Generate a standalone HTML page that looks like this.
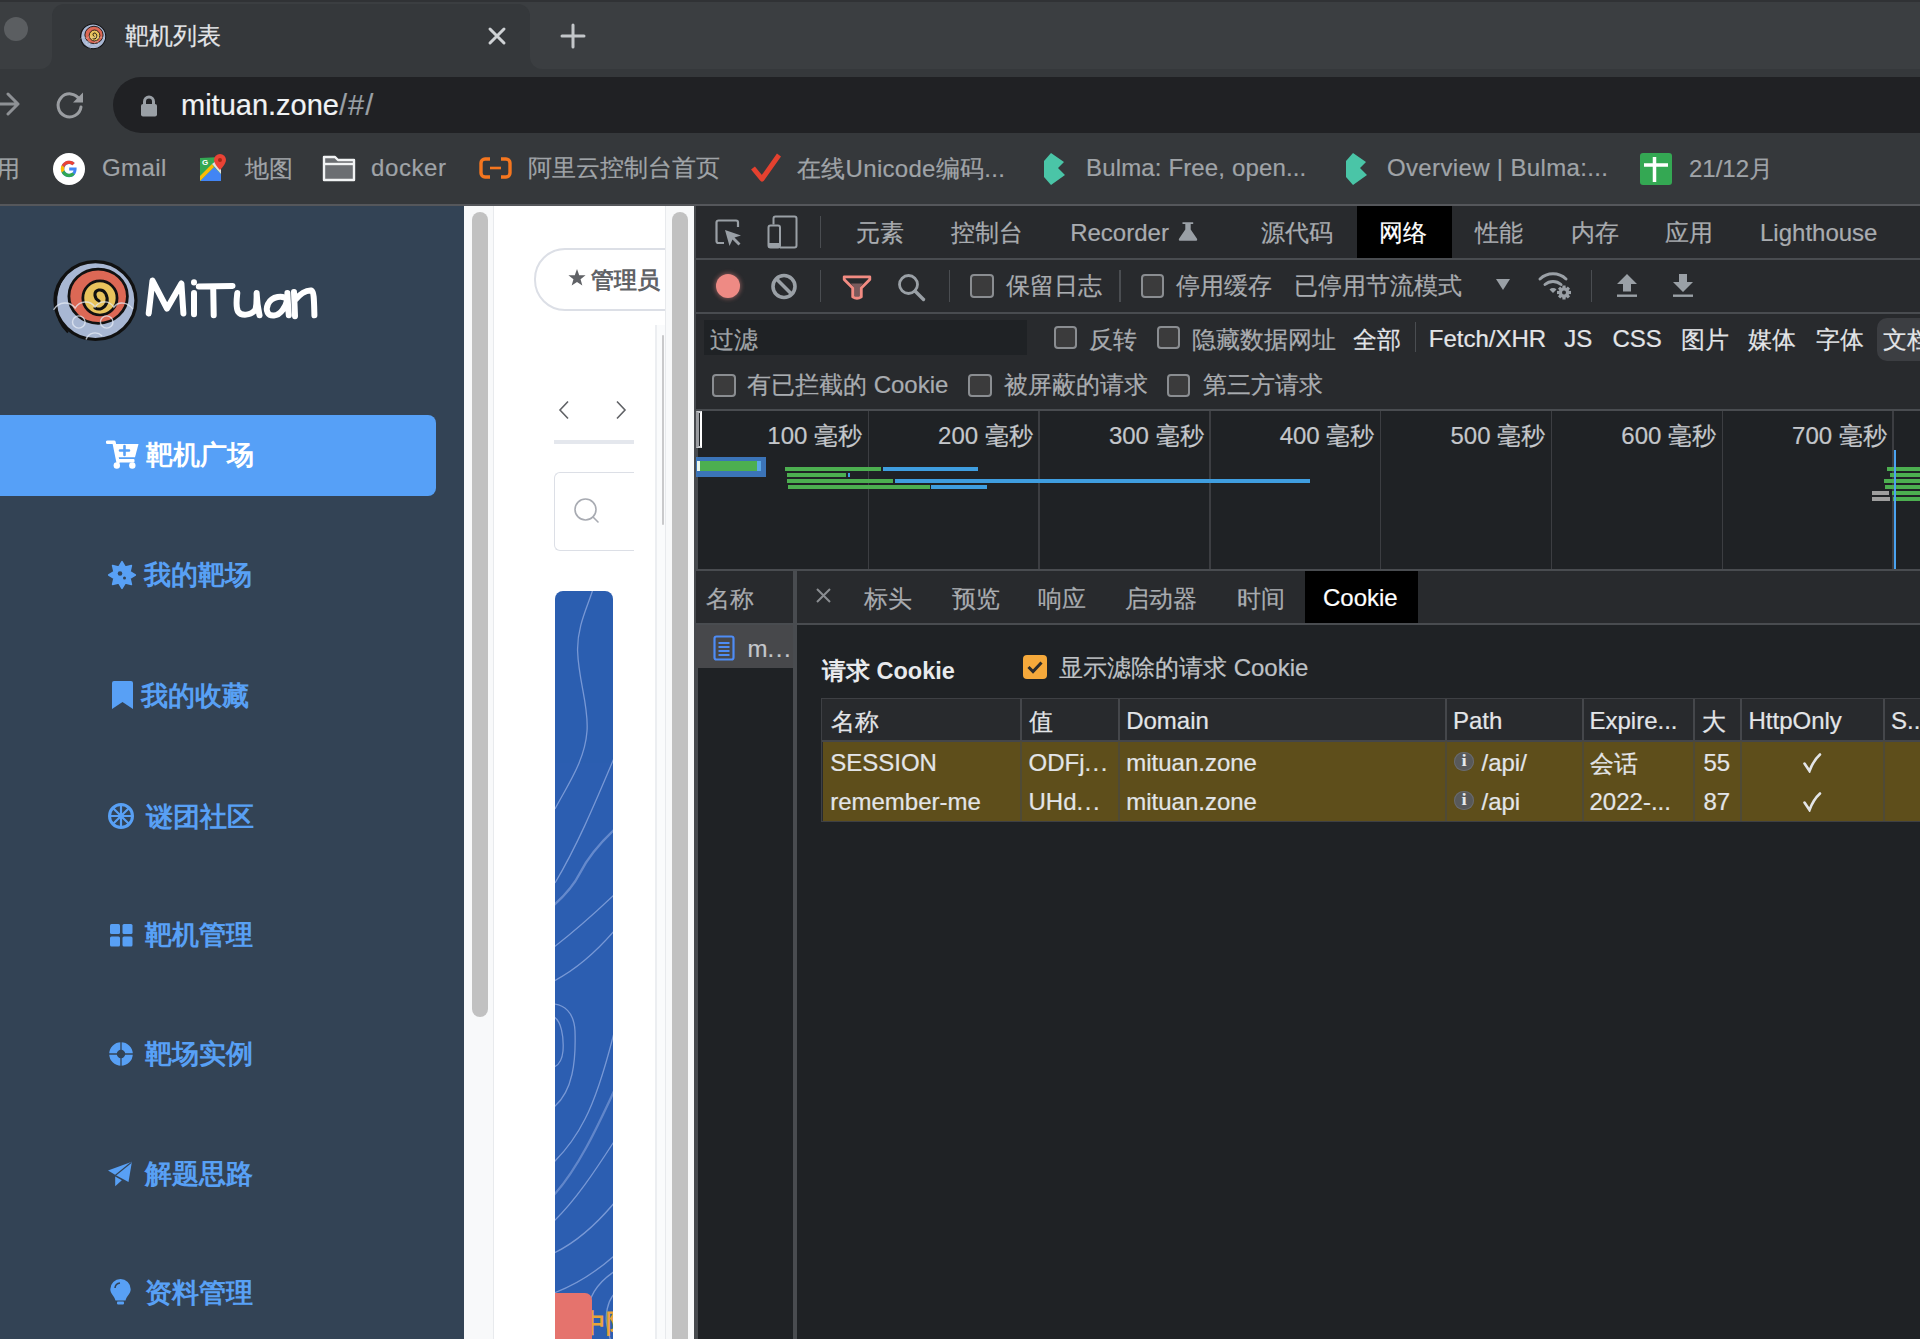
<!DOCTYPE html>
<html><head><meta charset="utf-8">
<style>
*{box-sizing:border-box;margin:0;padding:0}
html,body{width:1920px;height:1339px;overflow:hidden;background:#202124}
body{position:relative;font-family:"Liberation Sans",sans-serif;}
.a{position:absolute}
.t{position:absolute;white-space:nowrap;line-height:1;-webkit-text-stroke:0.2px currentColor}
</style></head><body>

<svg width="0" height="0" style="position:absolute"><defs>
<symbol id="logo" viewBox="0 0 100 96">
<ellipse cx="50.5" cy="47.5" rx="45" ry="44.5" fill="#a8b7d3" stroke="#111" stroke-width="3.6"/>
<path d="M16 20C3 36 3 68 20 84" stroke="#111" stroke-width="2.4" fill="none"/>
<ellipse cx="53.5" cy="42.5" rx="32.5" ry="31" fill="#dc6855" stroke="#111" stroke-width="3.1"/>
<ellipse cx="55.5" cy="44.5" rx="19" ry="19.5" fill="#e8c35c" stroke="#111" stroke-width="3.1"/>
<path d="M54.5 48C49 45 48 37 54 35.5C61 34 65 43 63 50C61 56 55 59 50 56" stroke="#111" stroke-width="3.4" fill="none" stroke-linecap="round"/>
<g stroke="#e6ecf6" stroke-width="1.6" fill="none" opacity="0.75">
<path d="M4 58C10 48 22 48 28 56C33 47 45 47 50 55C55 47 66 47 71 55C76 48 86 49 92 57"/>
<circle cx="32" cy="72" r="7"/><circle cx="63" cy="72" r="7"/>
<path d="M40 92C43 84 52 82 58 88"/>
</g>
</symbol>
</defs></svg>
<!-- ===== Tab strip ===== -->
<div class="a" style="left:0;top:0;width:1920px;height:69px;background:#3b3e41"></div>
<div class="a" style="left:0;top:0;width:1920px;height:2px;background:#303235"></div>
<div class="a" style="left:4px;top:17px;width:24px;height:24px;border-radius:50%;background:#5b5e61"></div>
<!-- active tab -->
<div class="a" style="left:52px;top:4px;width:478px;height:66px;background:#35383b;border-radius:12px 12px 0 0"></div>
<div class="a" style="left:40px;top:57px;width:12px;height:12px;background:#35383b"></div>
<div class="a" style="left:40px;top:57px;width:12px;height:12px;background:#3b3e41;border-radius:0 0 12px 0"></div>
<div class="a" style="left:530px;top:57px;width:12px;height:12px;background:#35383b"></div>
<div class="a" style="left:530px;top:57px;width:12px;height:12px;background:#3b3e41;border-radius:0 0 0 12px"></div>
<svg class="a" style="left:79px;top:23px" width="28" height="27" viewBox="0 0 100 96"><use href="#logo"/></svg>
<div class="t" style="left:125px;top:24px;font-size:24px;color:#e3e5e8">靶机列表</div>
<svg class="a" style="left:487px;top:26px" width="20" height="20" viewBox="0 0 20 20"><path d="M3 3L17 17M17 3L3 17" stroke="#cfd2d5" stroke-width="3" stroke-linecap="round"/></svg>
<svg class="a" style="left:559px;top:22px" width="28" height="28" viewBox="0 0 28 28"><path d="M14 3V25M3 14H25" stroke="#c3c6c9" stroke-width="3" stroke-linecap="round"/></svg>

<!-- ===== Toolbar ===== -->
<div class="a" style="left:0;top:69px;width:1920px;height:135px;background:#35383b"></div>
<svg class="a" style="left:0;top:90px" width="22" height="28" viewBox="0 0 22 28"><path d="M-6 14H18M8 4L18 14L8 24" stroke="#8e9195" stroke-width="3" fill="none" stroke-linecap="round" stroke-linejoin="round"/></svg>
<svg class="a" style="left:54px;top:90px" width="32" height="30" viewBox="0 0 32 30"><path d="M25.5 9.5A11.5 11.5 0 1 0 27 17" stroke="#9a9da1" stroke-width="3" fill="none" stroke-linecap="round"/><path d="M29 2.5V12.5H19Z" fill="#9a9da1"/></svg>
<div class="a" style="left:113px;top:77px;width:1850px;height:56px;background:#202124;border-radius:28px"></div>
<svg class="a" style="left:139px;top:94px" width="20" height="24" viewBox="0 0 20 24"><path d="M5.5 11V7.5A4.5 4.5 0 0 1 14.5 7.5V11" stroke="#9aa0a6" stroke-width="3" fill="none"/><rect x="2" y="10" width="16" height="12.5" rx="2" fill="#9aa0a6"/></svg>
<div class="t" style="left:181px;top:91px;font-size:29px;color:#f1f3f4">mituan.zone<span style="color:#9aa0a6;letter-spacing:1px">/#/</span></div>

<!-- ===== Bookmarks ===== -->
<div class="t" style="left:-4px;top:157px;font-size:24px;color:#a0a4a8">用</div>
<svg class="a" style="left:53px;top:153px" width="32" height="32" viewBox="0 0 32 32"><circle cx="16" cy="16" r="16" fill="#fff"/><path d="M23.6 14.5H16.2V17.6H20.5C20.1 19.7 18.4 20.9 16.2 20.9A4.9 4.9 0 1 1 19.4 12.3L21.7 10A8.2 8.2 0 1 0 16.2 24.2C20.3 24.2 24 21.2 23.6 14.5Z" fill="#4285f4"/><path d="M8.7 12.3L11.4 14.3A4.9 4.9 0 0 1 19.4 12.3L21.7 10A8.2 8.2 0 0 0 8.7 12.3Z" fill="#ea4335"/><path d="M8.7 12.3A8.2 8.2 0 0 0 8.7 19.7L11.4 17.6A4.9 4.9 0 0 1 11.4 14.3Z" fill="#fbbc05"/><path d="M8.7 19.7A8.2 8.2 0 0 0 21.8 21.6L19.2 19.6A4.9 4.9 0 0 1 11.4 17.6Z" fill="#34a853"/></svg>
<div class="t" style="left:102px;top:156px;font-size:24px;color:#a0a4a8;letter-spacing:0.4px">Gmail</div>
<svg class="a" style="left:199px;top:153px" width="30" height="29" viewBox="0 0 30 29"><path d="M1 5L22 4L22 28L1 28Z" fill="#34a853"/><path d="M1 28L15 14L22 21L22 28Z" fill="#4285f4"/><path d="M1 23L13 11L15 14L1 28Z" fill="#fbbc05"/><path d="M13 11L22 4V21Z" fill="#e0e0e0"/><path d="M21 1A6 6 0 0 1 27 7C27 11 21 17 21 17C21 17 15 11 15 7A6 6 0 0 1 21 1Z" fill="#ea4335"/><circle cx="21" cy="7" r="2" fill="#a52714"/><text x="3" y="12" font-size="8" fill="#fff" font-family="Liberation Sans" font-weight="bold">G</text></svg>
<div class="t" style="left:245px;top:157px;font-size:24px;color:#a0a4a8">地图</div>
<svg class="a" style="left:322px;top:155px" width="34" height="27" viewBox="0 0 34 27"><path d="M2 2H13L16 5H32V25H2Z" fill="#6b6e72" stroke="#f1f3f4" stroke-width="2.4" stroke-linejoin="round"/><path d="M2 9H32" stroke="#f1f3f4" stroke-width="2.4"/></svg>
<div class="t" style="left:371px;top:156px;font-size:24px;color:#a0a4a8;letter-spacing:0.6px">docker</div>
<svg class="a" style="left:479px;top:157px" width="33" height="22" viewBox="0 0 33 22"><path d="M11 2H6A4 4 0 0 0 2 6V16A4 4 0 0 0 6 20H11M22 2H27A4 4 0 0 1 31 6V16A4 4 0 0 1 27 20H22" stroke="#f5761f" stroke-width="3.4" fill="none"/><path d="M11 11H22" stroke="#f5761f" stroke-width="2.6"/></svg>
<div class="t" style="left:528px;top:157px;font-size:23.5px;color:#a0a4a8">阿里云控制台首页</div>
<svg class="a" style="left:751px;top:152px" width="30" height="30" viewBox="0 0 30 30"><path d="M2 16L11 27L28 3" stroke="#e4412f" stroke-width="5" fill="none" stroke-linejoin="round"/></svg>
<div class="t" style="left:797px;top:157px;font-size:24px;color:#a0a4a8;letter-spacing:0.3px">在线Unicode编码...</div>
<svg class="a" style="left:1042px;top:153px" width="24" height="32" viewBox="0 0 24 32"><path d="M9 0L22 9L16 15L23 22L9 32L2 24V8Z" fill="#4ac5a7"/></svg>
<div class="t" style="left:1086px;top:156px;font-size:24px;color:#a0a4a8;letter-spacing:0.15px">Bulma: Free, open...</div>
<svg class="a" style="left:1344px;top:153px" width="24" height="32" viewBox="0 0 24 32"><path d="M9 0L22 9L16 15L23 22L9 32L2 24V8Z" fill="#4ac5a7"/></svg>
<div class="t" style="left:1387px;top:156px;font-size:24px;color:#a0a4a8;letter-spacing:0.35px">Overview | Bulma:...</div>
<svg class="a" style="left:1640px;top:153px" width="32" height="32" viewBox="0 0 32 32"><rect x="0" y="0" width="32" height="32" rx="3" fill="#34a853"/><path d="M4 12H28M14.5 4V29" stroke="#fff" stroke-width="3.5"/></svg>
<div class="t" style="left:1689px;top:157px;font-size:24px;color:#a0a4a8">21/12月</div>


<!-- ===== Sidebar ===== -->
<div class="a" style="left:0;top:205px;width:464px;height:1134px;background:#334355"></div>
<svg class="a" style="left:50px;top:259px" width="90" height="84" viewBox="0 0 100 96" preserveAspectRatio="none"><use href="#logo"/></svg>
<svg class="a" style="left:140px;top:274px" width="185" height="50" viewBox="140 274 185 50"><g stroke="#fff" stroke-width="6" fill="none" stroke-linecap="round" stroke-linejoin="round">
<path d="M148.7 313.4L152.5 280.6L167 308.5L181.4 283.5L183.4 313.4"/>
<path d="M194 293V314.3M194 282.3V282.6"/>
<path d="M198.8 286.4L232.5 285.9M213.2 286.9L213.7 315.3"/>
<path d="M237.3 293C236.5 300 235.5 307 238 311.5C241 316 251 316 255.6 309.5C257 303 256.6 297 256.6 293C257 302 258 309 259.5 315.3"/>
<path d="M287.4 299.5C283 295 272 296 268 304C265 311 268 316 274 315.5C281 315 286 306 287.4 299.5M287.4 293C287.8 302 288.2 309 288.8 315.3"/>
<path d="M294 292L295 316.2M295 300C300 294 306 290 311.5 290.5C314 292 314 300 314.4 315.3"/>
</g></svg>
<div class="a" style="left:0;top:415px;width:436px;height:81px;background:#56a0f7;border-radius:0 8px 8px 0"></div>
<div class="t" style="left:146px;top:442.2px;font-size:27px;font-weight:bold;-webkit-text-stroke:0;color:#ffffff">靶机广场</div>
<div class="t" style="left:144.4px;top:562.0px;font-size:27px;font-weight:bold;-webkit-text-stroke:0;color:#58a0f5">我的靶场</div>
<div class="t" style="left:141px;top:683.3px;font-size:27px;font-weight:bold;-webkit-text-stroke:0;color:#58a0f5">我的收藏</div>
<div class="t" style="left:146px;top:803.5px;font-size:27px;font-weight:bold;-webkit-text-stroke:0;color:#58a0f5">谜团社区</div>
<div class="t" style="left:145.4px;top:922.4px;font-size:27px;font-weight:bold;-webkit-text-stroke:0;color:#58a0f5">靶机管理</div>
<div class="t" style="left:145.4px;top:1041.3px;font-size:27px;font-weight:bold;-webkit-text-stroke:0;color:#58a0f5">靶场实例</div>
<div class="t" style="left:145.4px;top:1160.5px;font-size:27px;font-weight:bold;-webkit-text-stroke:0;color:#58a0f5">解题思路</div>
<div class="t" style="left:145.4px;top:1279.5px;font-size:27px;font-weight:bold;-webkit-text-stroke:0;color:#58a0f5">资料管理</div>

<!-- cart -->
<svg class="a" style="left:106px;top:439px" width="33" height="31" viewBox="0 0 33 31"><path d="M1.5 3.2H8L12 23" stroke="#fff" stroke-width="3.4" fill="none" stroke-linecap="round" stroke-linejoin="round"/><path d="M9 5H32.5L29 18.3H11.5Z" fill="#fff"/><rect x="11.5" y="20" width="17" height="3.4" rx="1" fill="#fff"/><circle cx="10.8" cy="26.5" r="3.2" fill="#fff"/><circle cx="26.3" cy="26.5" r="3.2" fill="#fff"/><path d="M18.5 7V16M14 11.5H23" stroke="#56a0f7" stroke-width="2.6" stroke-linecap="round"/></svg>
<!-- gear -->
<svg class="a" style="left:106.8px;top:560px" width="30" height="30" viewBox="0 0 30 30"><path d="M15.00 1.70 L18.29 7.05 L24.40 5.60 L22.95 11.71 L28.30 15.00 L22.95 18.29 L24.40 24.40 L18.29 22.95 L15.00 28.30 L11.71 22.95 L5.60 24.40 L7.05 18.29 L1.70 15.00 L7.05 11.71 L5.60 5.60 L11.71 7.05Z" fill="#58a0f5" stroke="#58a0f5" stroke-width="1.6" stroke-linejoin="round"/><circle cx="13" cy="13.5" r="2.3" fill="#334355"/><circle cx="17.5" cy="18" r="1.5" fill="#334355"/></svg>
<!-- bookmark -->
<svg class="a" style="left:111px;top:681px" width="23" height="29" viewBox="0 0 23 29"><path d="M1 2A2 2 0 0 1 3 0H20A2 2 0 0 1 22 2V28L11.5 21L1 28Z" fill="#58a0f5"/></svg>
<!-- wheel -->
<svg class="a" style="left:107px;top:802px" width="28" height="28" viewBox="0 0 28 28"><circle cx="14" cy="14" r="11.5" stroke="#58a0f5" stroke-width="3" fill="none"/><g stroke="#58a0f5" stroke-width="2.2"><path d="M14 3V25M3 14H25M6.2 6.2L21.8 21.8M21.8 6.2L6.2 21.8"/></g><circle cx="14" cy="14" r="2.6" fill="#58a0f5"/></svg>
<!-- grid -->
<svg class="a" style="left:110px;top:924px" width="23" height="23" viewBox="0 0 23 23"><g fill="#58a0f5"><rect x="0" y="0" width="10" height="10" rx="1.5"/><rect x="12.5" y="0" width="10" height="10" rx="1.5"/><rect x="0" y="12.5" width="10" height="10" rx="1.5"/><rect x="12.5" y="12.5" width="10" height="10" rx="1.5"/></g></svg>
<!-- life ring -->
<svg class="a" style="left:108.2px;top:1040.7px" width="26" height="26" viewBox="0 0 26 26"><circle cx="13" cy="13" r="8" stroke="#58a0f5" stroke-width="7.6" fill="none"/><path d="M13 0V26M0 13H26" stroke="#334355" stroke-width="1.3"/></svg>
<!-- paper plane -->
<svg class="a" style="left:107px;top:1161px" width="26" height="26" viewBox="0 0 26 26"><path d="M1 9.5L24.9 0.7L21.5 21L8.5 14Z" fill="#58a0f5"/><path d="M8.5 14.2L24.5 1.2" stroke="#334355" stroke-width="1.1"/><path d="M8.2 15.6L14.8 19.2L8.2 25.3Z" fill="#58a0f5"/></svg>
<!-- bulb -->
<svg class="a" style="left:109px;top:1278px" width="23" height="28" viewBox="0 0 23 28"><path d="M11.5 1A10.2 10.2 0 0 1 21.7 11.2C21.7 15.5 17.8 17.5 16.5 22.6H6.5C5.2 17.5 1.3 15.5 1.3 11.2A10.2 10.2 0 0 1 11.5 1Z" fill="#58a0f5"/><rect x="8" y="23.6" width="7" height="2.8" rx="0.8" fill="#58a0f5"/><path d="M6 10A5.5 5.5 0 0 1 11 5" stroke="#334355" stroke-width="1.6" fill="none"/></svg>

<!-- ===== page middle ===== -->
<div class="a" style="left:464px;top:205px;width:230px;height:1134px;background:#f8f9fa"></div>
<div class="a" style="left:493px;top:205px;width:1px;height:1134px;background:#e8eaed"></div>
<div class="a" style="left:494px;top:205px;width:171px;height:1134px;background:#ffffff;overflow:hidden">
  <div class="a" style="left:39.5px;top:43px;width:200px;height:62.5px;border:2px solid #dcdfe6;border-radius:31px"></div>
  <svg class="a" style="left:74px;top:64px" width="18" height="17" viewBox="0 0 24 23"><path d="M12 0L15 8.3L23.6 8.6L16.8 14L19.2 22.4L12 17.5L4.8 22.4L7.2 14L0.4 8.6L9 8.3Z" fill="#606266"/></svg>
  <div class="t" style="left:97px;top:64px;font-size:23px;color:#606266;font-weight:bold;-webkit-text-stroke:0">管理员</div>
  <svg class="a" style="left:64px;top:195px" width="12" height="20" viewBox="0 0 12 20"><path d="M10 1.5L2 10L10 18.5" stroke="#606266" stroke-width="1.6" fill="none"/></svg>
  <svg class="a" style="left:121px;top:195px" width="12" height="20" viewBox="0 0 12 20"><path d="M2 1.5L10 10L2 18.5" stroke="#606266" stroke-width="1.6" fill="none"/></svg>
  <div class="a" style="left:59.5px;top:235px;width:80px;height:3.5px;background:#e4e7ed"></div>
  <div class="a" style="left:162.5px;top:120px;width:9px;height:1100px;background:#fafbfc"></div>
  <div class="a" style="left:161px;top:120px;width:1.5px;height:1100px;background:#eceef1"></div>
  <div class="a" style="left:168px;top:130px;width:2px;height:190px;background:#c9c9cb;border-radius:1px"></div>
  <div class="a" style="left:59.5px;top:267px;width:80px;height:79px;border:1.5px solid #dcdfe6;border-right:none;border-radius:6px 0 0 6px"></div>
  <svg class="a" style="left:79px;top:292px" width="28" height="28" viewBox="0 0 28 28"><circle cx="12.5" cy="12.5" r="10.5" stroke="#a8abb2" stroke-width="1.6" fill="none"/><path d="M20 20L25 25" stroke="#a8abb2" stroke-width="1.6" stroke-linecap="round"/></svg>
  <div class="a" style="left:61px;top:386px;width:58px;height:800px;background:#2c5eb1;border-radius:8px;overflow:hidden">
    <svg class="a" style="left:0;top:0" width="58" height="800" viewBox="0 0 58 800"><g stroke="#86a3dc" stroke-width="1.3" fill="none" opacity="0.85">
<path d="M38 -2C33 15 22 35 22.6 60C23.5 90 34 115 32 140C30 170 12 195 0 218"/>
<path d="M60 165C45 200 25 250 0 292"/>
<path d="M60 238C45 252 32 268 25 282C18 296 8 306 -1 314" stroke-width="2.4" opacity="0.75"/>
<path d="M60 303C40 322 20 340 -1 356"/>
<path d="M60 339C42 360 22 378 -1 390"/>
<path d="M-1 413C8 414 19 420 20 440C21 470 18 500 -1 516"/>
<path d="M-1 426C6 430 9 445 8 460C7 470 4 474 -1 476"/>
<path d="M60 438C52 470 42 505 30 528C20 548 10 560 -1 571"/>
<path d="M60 498C45 530 25 575 -1 604" stroke-width="2.3" opacity="0.7"/>
<path d="M60 549C40 580 20 610 -1 630"/>
<path d="M60 611C40 635 20 652 -1 662"/>
<path d="M60 664C40 682 20 694 -1 702"/>
<path d="M60 680C45 690 32 705 33 725C34 745 38 760 39 802"/>
<path d="M60 702C52 710 50 725 52 735C54 748 58 755 60 760"/>
</g></svg>
    <div class="t" style="left:25px;top:719px;font-size:26px;color:#eaa43a;font-weight:bold;-webkit-text-stroke:0">中阿</div>
    <div class="a" style="left:0;top:702px;width:37px;height:60px;background:#e5736d;border-radius:0 7px 0 0"></div>
  </div>
</div>
<div class="a" style="left:665px;top:205px;width:1px;height:1134px;background:#e8eaed"></div>
<div class="a" style="left:472px;top:212px;width:16px;height:805px;background:#c1c1c1;border-radius:8px"></div>
<div class="a" style="left:672px;top:212px;width:16px;height:1140px;background:#c1c1c1;border-radius:8px"></div>

<!-- ===== DevTools ===== -->
<div class="a" style="left:694px;top:205px;width:1226px;height:1134px;background:#1f2225"></div>
<div class="a" style="left:694px;top:205px;width:3.5px;height:1134px;background:#474a4e"></div>
<div class="a" style="left:696px;top:205px;width:1224px;height:1px;background:#494c50"></div>
<div class="a" style="left:696px;top:206px;width:1224px;height:52px;background:#282a2d"></div>
<div class="a" style="left:696px;top:258px;width:1224px;height:2px;background:#494c50"></div>
<svg class="a" style="left:714px;top:218px" width="30" height="30" viewBox="0 0 30 30"><path d="M10 25H4.5A2 2 0 0 1 2.5 23V4.5A2 2 0 0 1 4.5 2.5H22A2 2 0 0 1 24 4.5V9" stroke="#9aa0a6" stroke-width="2.2" fill="none"/><path d="M11 12L27 17.5L20.5 19.5L26.5 25.5L24.5 27.5L18.5 21.5L15.5 28Z" fill="#9aa0a6"/></svg>
<svg class="a" style="left:766px;top:215px" width="34" height="35" viewBox="0 0 34 35"><path d="M7.5 9.5V3.5A2 2 0 0 1 9.5 1.5H28.5A2 2 0 0 1 30.5 3.5V30.5A2 2 0 0 1 28.5 32.5H14" stroke="#9aa0a6" stroke-width="2" fill="none"/><rect x="2.5" y="10.5" width="11.5" height="22" rx="2" stroke="#9aa0a6" stroke-width="2" fill="none"/><rect x="2.5" y="28" width="11.5" height="4.5" fill="#9aa0a6"/></svg>
<div class="a" style="left:819.5px;top:216px;width:1.5px;height:32px;background:#4a4d51"></div>
<div class="t" style="left:855.7px;top:221px;font-size:24px;color:#a9acb0;">元素</div>
<div class="t" style="left:951px;top:221px;font-size:24px;color:#a9acb0;">控制台</div>
<div class="t" style="left:1070.2px;top:221px;font-size:24px;color:#a9acb0;">Recorder</div>
<div class="t" style="left:1260.7px;top:221px;font-size:24px;color:#a9acb0;">源代码</div>
<div class="t" style="left:1474.8px;top:221px;font-size:24px;color:#a9acb0;">性能</div>
<div class="t" style="left:1570.7px;top:221px;font-size:24px;color:#a9acb0;">内存</div>
<div class="t" style="left:1665px;top:221px;font-size:24px;color:#a9acb0;">应用</div>
<div class="t" style="left:1760.0px;top:221px;font-size:24px;color:#a9acb0;">Lighthouse</div>
<svg class="a" style="left:1178px;top:221px" width="20" height="21" viewBox="0 0 20 21"><path d="M4.5 1.2H15.2V3H12.7V8.5L19 17.8Q19.8 19.8 17.5 19.8H2.5Q0.2 19.8 1 17.8L7.3 8.5V3H4.5Z" fill="#9aa0a6"/></svg>
<div class="a" style="left:1357px;top:206px;width:95px;height:52px;background:#000"></div>
<div class="t" style="left:1379px;top:221px;font-size:24px;color:#ffffff;">网络</div>
<div class="a" style="left:696px;top:260px;width:1224px;height:52px;background:#282a2d"></div>
<div class="a" style="left:696px;top:312px;width:1224px;height:2px;background:#494c50"></div>
<div class="a" style="left:716px;top:273.6px;width:24px;height:24px;border-radius:50%;background:#ee8a84;box-shadow:0 0 4px 1px rgba(238,138,132,0.45)"></div>
<svg class="a" style="left:770px;top:272px" width="28" height="29" viewBox="0 0 28 29"><circle cx="14" cy="14.5" r="11" stroke="#9aa0a6" stroke-width="3.6" fill="none"/><path d="M6.5 7L21.5 22" stroke="#9aa0a6" stroke-width="3.6"/></svg>
<div class="a" style="left:819.5px;top:270px;width:1.5px;height:32px;background:#4a4d51"></div>
<svg class="a" style="left:842px;top:275px" width="30" height="26" viewBox="0 0 30 26"><path d="M9 8.5H21L18 12.5V22H12V12.5Z" fill="#7a5a5c"/><path d="M2.2 1.8H27.8V4.6L19.3 13V21.8Q15 24.8 10.7 21.8V13L2.2 4.6Z" fill="none" stroke="#f28b82" stroke-width="2.8" stroke-linejoin="round"/></svg>
<svg class="a" style="left:897px;top:272.5px" width="30" height="29" viewBox="0 0 30 29"><circle cx="11.5" cy="11.5" r="9" stroke="#9aa0a6" stroke-width="2.8" fill="none"/><path d="M18 18L26.5 26.5" stroke="#9aa0a6" stroke-width="3.4" stroke-linecap="round"/></svg>
<div class="a" style="left:948.5px;top:270px;width:1.5px;height:32px;background:#4a4d51"></div>
<div class="a" style="left:970px;top:274px;width:23.5px;height:23.5px;border:2px solid #8a8d91;border-radius:4px;background:#3b3b3c"></div>
<div class="t" style="left:1006px;top:273.5px;font-size:24px;color:#a9acb0;">保留日志</div>
<div class="a" style="left:1119px;top:270px;width:1.5px;height:32px;background:#4a4d51"></div>
<div class="a" style="left:1140.5px;top:274px;width:23.5px;height:23.5px;border:2px solid #8a8d91;border-radius:4px;background:#3b3b3c"></div>
<div class="t" style="left:1176px;top:273.5px;font-size:24px;color:#a9acb0;">停用缓存</div>
<div class="t" style="left:1294px;top:273.5px;font-size:24px;color:#a9acb0;">已停用节流模式</div>
<svg class="a" style="left:1495px;top:278px" width="16" height="13" viewBox="0 0 16 13"><path d="M1 1H15L8 12Z" fill="#9aa0a6"/></svg>
<svg class="a" style="left:1537px;top:270px" width="36" height="30" viewBox="0 0 36 30"><g fill="none" stroke="#9aa0a6" stroke-width="3" stroke-linecap="round"><path d="M3 9A19 19 0 0 1 29 9"/><path d="M8 14.5A12 12 0 0 1 24 14.5"/></g><path d="M12.5 19.5L16 23L19.5 19.5A5 5 0 0 0 12.5 19.5Z" fill="#9aa0a6"/><g transform="translate(27 22.5)"><circle r="5.2" fill="#9aa0a6"/><g fill="#9aa0a6"><rect x="-1.6" y="-7" width="3.2" height="14"/><rect x="-7" y="-1.6" width="14" height="3.2"/><rect x="-1.6" y="-7" width="3.2" height="14" transform="rotate(45)"/><rect x="-1.6" y="-7" width="3.2" height="14" transform="rotate(-45)"/></g><circle r="2" fill="#282a2d"/></g></svg>
<div class="a" style="left:1590.5px;top:270px;width:1.5px;height:32px;background:#4a4d51"></div>
<svg class="a" style="left:1616px;top:273px" width="22" height="26" viewBox="0 0 22 26"><path d="M11 1L21 11H15V18.5H7V11H1Z" fill="#9aa0a6"/><rect x="1" y="21.5" width="20" height="2.4" fill="#9aa0a6"/></svg>
<svg class="a" style="left:1672px;top:273px" width="22" height="26" viewBox="0 0 22 26"><path d="M7 1H15V9H21L11 19L1 9H7Z" fill="#9aa0a6"/><rect x="1" y="21.5" width="20" height="2.4" fill="#9aa0a6"/></svg>
<div class="a" style="left:696px;top:314px;width:1224px;height:95px;background:#282a2d"></div>
<div class="a" style="left:696px;top:409px;width:1224px;height:2px;background:#494c50"></div>
<div class="a" style="left:704px;top:319.5px;width:323px;height:35.5px;background:#1f2225"></div>
<div class="t" style="left:710px;top:327.5px;font-size:24px;color:#a0a4a8;">过滤</div>
<div class="a" style="left:1053.5px;top:325.5px;width:23.5px;height:23.5px;border:2px solid #8a8d91;border-radius:4px;background:#3b3b3c"></div>
<div class="t" style="left:1089px;top:327.5px;font-size:24px;color:#a9acb0;">反转</div>
<div class="a" style="left:1156.5px;top:325.5px;width:23.5px;height:23.5px;border:2px solid #8a8d91;border-radius:4px;background:#3b3b3c"></div>
<div class="t" style="left:1192px;top:327.5px;font-size:24px;color:#a9acb0;">隐藏数据网址</div>
<div class="t" style="left:1352.5px;top:327.5px;font-size:24px;color:#e3e5e8;">全部</div>
<div class="a" style="left:1414.5px;top:322px;width:1.5px;height:30px;background:#4a4d51"></div>
<div class="a" style="left:1877px;top:317.5px;width:60px;height:43px;background:#3c3e42;border-radius:10px"></div>
<div class="t" style="left:1428.8px;top:326.5px;font-size:24px;color:#e3e5e8;">Fetch/XHR</div>
<div class="t" style="left:1564.3px;top:326.5px;font-size:24px;color:#e3e5e8;">JS</div>
<div class="t" style="left:1612.5px;top:326.5px;font-size:24px;color:#e3e5e8;">CSS</div>
<div class="t" style="left:1681px;top:327.5px;font-size:24px;color:#e3e5e8;">图片</div>
<div class="t" style="left:1748.4px;top:327.5px;font-size:24px;color:#e3e5e8;">媒体</div>
<div class="t" style="left:1815.6px;top:327.5px;font-size:24px;color:#e3e5e8;">字体</div>
<div class="t" style="left:1882.5px;top:327.5px;font-size:24px;color:#e3e5e8;">文档</div>
<div class="a" style="left:712px;top:373.5px;width:23.5px;height:23.5px;border:2px solid #8a8d91;border-radius:4px;background:#3b3b3c"></div>
<div class="t" style="left:747px;top:373px;font-size:24px;color:#a9acb0;">有已拦截的 Cookie</div>
<div class="a" style="left:968px;top:373.5px;width:23.5px;height:23.5px;border:2px solid #8a8d91;border-radius:4px;background:#3b3b3c"></div>
<div class="t" style="left:1003.5px;top:373px;font-size:24px;color:#a9acb0;">被屏蔽的请求</div>
<div class="a" style="left:1166.5px;top:373.5px;width:23.5px;height:23.5px;border:2px solid #8a8d91;border-radius:4px;background:#3b3b3c"></div>
<div class="t" style="left:1202.5px;top:373px;font-size:24px;color:#a9acb0;">第三方请求</div>
<div class="a" style="left:696px;top:409px;width:1224px;height:2px;background:#494c50"></div>
<div class="a" style="left:867.5px;top:411px;width:1.5px;height:158px;background:#3c3e42"></div>
<div class="t" style="left:662.0px;top:423.5px;width:200px;text-align:right;font-size:24px;color:#c4c7cb">100 毫秒</div>
<div class="a" style="left:1038.3px;top:411px;width:1.5px;height:158px;background:#3c3e42"></div>
<div class="t" style="left:832.8px;top:423.5px;width:200px;text-align:right;font-size:24px;color:#c4c7cb">200 毫秒</div>
<div class="a" style="left:1209.1px;top:411px;width:1.5px;height:158px;background:#3c3e42"></div>
<div class="t" style="left:1003.6px;top:423.5px;width:200px;text-align:right;font-size:24px;color:#c4c7cb">300 毫秒</div>
<div class="a" style="left:1379.9px;top:411px;width:1.5px;height:158px;background:#3c3e42"></div>
<div class="t" style="left:1174.4px;top:423.5px;width:200px;text-align:right;font-size:24px;color:#c4c7cb">400 毫秒</div>
<div class="a" style="left:1550.7px;top:411px;width:1.5px;height:158px;background:#3c3e42"></div>
<div class="t" style="left:1345.2px;top:423.5px;width:200px;text-align:right;font-size:24px;color:#c4c7cb">500 毫秒</div>
<div class="a" style="left:1721.5px;top:411px;width:1.5px;height:158px;background:#3c3e42"></div>
<div class="t" style="left:1516.0px;top:423.5px;width:200px;text-align:right;font-size:24px;color:#c4c7cb">600 毫秒</div>
<div class="a" style="left:1892.3px;top:411px;width:1.5px;height:158px;background:#3c3e42"></div>
<div class="t" style="left:1686.8px;top:423.5px;width:200px;text-align:right;font-size:24px;color:#c4c7cb">700 毫秒</div>
<div class="a" style="left:696px;top:411px;width:6px;height:37px;border:2px solid #c8cacd;border-left:3px solid #9a9ca0;border-right-color:#fff"></div>
<div class="a" style="left:696px;top:457px;width:70px;height:20px;background:#3b74b8"></div>
<div class="a" style="left:697px;top:461px;width:61px;height:10px;background:#4caf50"></div>
<div class="a" style="left:757px;top:461px;width:4px;height:10px;background:#5aa7e6"></div>
<div class="a" style="left:697px;top:461px;width:3px;height:10px;background:#e8f5e9"></div>
<div class="a" style="left:785px;top:467px;width:96.3px;height:4px;background:#4caf50"></div>
<div class="a" style="left:882.5px;top:467px;width:95.0px;height:4px;background:#3f9ee0"></div>
<div class="a" style="left:786.7px;top:473px;width:59.6px;height:4px;background:#4caf50"></div>
<div class="a" style="left:848px;top:473px;width:1.5px;height:4px;background:#3f9ee0"></div>
<div class="a" style="left:787px;top:479px;width:106.0px;height:4px;background:#4caf50"></div>
<div class="a" style="left:894.7px;top:479px;width:415.3px;height:4px;background:#3f9ee0"></div>
<div class="a" style="left:788px;top:485px;width:141.7px;height:4px;background:#4caf50"></div>
<div class="a" style="left:930.7px;top:485px;width:56.3px;height:4px;background:#3f9ee0"></div>
<div class="a" style="left:1887px;top:467px;width:33px;height:4px;background:#4caf50"></div>
<div class="a" style="left:1890px;top:473px;width:30px;height:4px;background:#4caf50"></div>
<div class="a" style="left:1884px;top:479px;width:36px;height:4px;background:#4caf50"></div>
<div class="a" style="left:1885px;top:485px;width:35px;height:4px;background:#4caf50"></div>
<div class="a" style="left:1892px;top:491px;width:28px;height:4px;background:#4caf50"></div>
<div class="a" style="left:1893px;top:497px;width:27px;height:4px;background:#4caf50"></div>
<div class="a" style="left:1872px;top:491px;width:17px;height:4px;background:#9e9e9e"></div>
<div class="a" style="left:1871.5px;top:497px;width:18.5px;height:4px;background:#9e9e9e"></div>
<div class="a" style="left:1894px;top:450px;width:2px;height:119px;background:#4aa3f0"></div>
<div class="a" style="left:696px;top:569px;width:1224px;height:2px;background:#494c50"></div>
<div class="a" style="left:696px;top:571px;width:97px;height:52px;background:#282a2d"></div>
<div class="a" style="left:696px;top:623px;width:97px;height:2px;background:#494c50"></div>
<div class="a" style="left:696px;top:625px;width:97px;height:43px;background:#47484b"></div>
<div class="a" style="left:793px;top:571px;width:4px;height:768px;background:#494c50"></div>
<div class="t" style="left:706px;top:586.5px;font-size:24px;color:#a9acb0;">名称</div>
<svg class="a" style="left:713px;top:635px" width="22" height="26" viewBox="0 0 22 26"><rect x="1.5" y="1.5" width="19" height="23" rx="2" stroke="#4e8cf5" stroke-width="2.2" fill="none"/><path d="M5.5 8H16.5M5.5 12H16.5M5.5 16H16.5M5.5 20H16.5" stroke="#4e8cf5" stroke-width="2"/></svg>
<div class="t" style="left:747.5px;top:637px;font-size:24px;color:#c4c7cb;">m<span style="letter-spacing:1.6px">...</span></div>
<div class="a" style="left:797px;top:571px;width:1123px;height:52px;background:#282a2d"></div>
<div class="a" style="left:797px;top:623px;width:1123px;height:2px;background:#494c50"></div>
<svg class="a" style="left:815px;top:587px" width="17" height="17" viewBox="0 0 17 17"><path d="M2 2L15 15M15 2L2 15" stroke="#8a8d91" stroke-width="2"/></svg>
<div class="t" style="left:864px;top:586.5px;font-size:24px;color:#a9acb0;">标头</div>
<div class="t" style="left:951.5px;top:586.5px;font-size:24px;color:#a9acb0;">预览</div>
<div class="t" style="left:1038.3px;top:586.5px;font-size:24px;color:#a9acb0;">响应</div>
<div class="t" style="left:1125.4px;top:586.5px;font-size:24px;color:#a9acb0;">启动器</div>
<div class="t" style="left:1237px;top:586.5px;font-size:24px;color:#a9acb0;">时间</div>
<div class="a" style="left:1305px;top:571px;width:113px;height:52px;background:#000"></div>
<div class="t" style="left:1323px;top:586px;font-size:24px;color:#ffffff;">Cookie</div>
<div class="t" style="left:822px;top:659.5px;font-size:23.5px;color:#e8eaed;font-weight:bold;-webkit-text-stroke:0">请求 Cookie</div>
<div class="a" style="left:1023px;top:654.5px;width:24px;height:24px;background:#f5a93b;border-radius:4px"></div>
<svg class="a" style="left:1023px;top:654.5px" width="24" height="24" viewBox="0 0 24 24"><path d="M5.5 12L10 16.5L18.5 7.5" stroke="#2b2b2b" stroke-width="3" fill="none"/></svg>
<div class="t" style="left:1059px;top:655.5px;font-size:24px;color:#bfc2c6;">显示滤除的请求 Cookie</div>
<div class="a" style="left:821px;top:698px;width:1110px;height:124px;border:1.5px solid #3e4044;background:#282a2d"></div>
<div class="a" style="left:822.5px;top:741px;width:1100px;height:79.5px;background:#5e4e1b"></div>
<div class="a" style="left:822px;top:739.5px;width:1098px;height:2px;background:#44464a"></div>
<div class="a" style="left:1020px;top:699px;width:2px;height:41px;background:#45474b"></div>
<div class="a" style="left:1020px;top:741px;width:2px;height:80px;background:#4f4a36"></div>
<div class="a" style="left:1117.5px;top:699px;width:2px;height:41px;background:#45474b"></div>
<div class="a" style="left:1117.5px;top:741px;width:2px;height:80px;background:#4f4a36"></div>
<div class="a" style="left:1444.5px;top:699px;width:2px;height:41px;background:#45474b"></div>
<div class="a" style="left:1444.5px;top:741px;width:2px;height:80px;background:#4f4a36"></div>
<div class="a" style="left:1582px;top:699px;width:2px;height:41px;background:#45474b"></div>
<div class="a" style="left:1582px;top:741px;width:2px;height:80px;background:#4f4a36"></div>
<div class="a" style="left:1693px;top:699px;width:2px;height:41px;background:#45474b"></div>
<div class="a" style="left:1693px;top:741px;width:2px;height:80px;background:#4f4a36"></div>
<div class="a" style="left:1740px;top:699px;width:2px;height:41px;background:#45474b"></div>
<div class="a" style="left:1740px;top:741px;width:2px;height:80px;background:#4f4a36"></div>
<div class="a" style="left:1883px;top:699px;width:2px;height:41px;background:#45474b"></div>
<div class="a" style="left:1883px;top:741px;width:2px;height:80px;background:#4f4a36"></div>
<div class="t" style="left:830.7px;top:709.5px;font-size:24px;color:#e3e5e8;">名称</div>
<div class="t" style="left:1029px;top:709.5px;font-size:24px;color:#e3e5e8;">值</div>
<div class="t" style="left:1701.5px;top:709.5px;font-size:24px;color:#e3e5e8;">大</div>
<div class="t" style="left:1126.2px;top:708.8px;font-size:24px;color:#e3e5e8;">Domain</div>
<div class="t" style="left:1453.0px;top:708.8px;font-size:24px;color:#e3e5e8;">Path</div>
<div class="t" style="left:1589.5px;top:708.8px;font-size:24px;color:#e3e5e8;">Expire...</div>
<div class="t" style="left:1748.5px;top:708.8px;font-size:24px;color:#e3e5e8;">HttpOnly</div>
<div class="t" style="left:1891.0px;top:708.8px;font-size:24px;color:#e3e5e8;">S..</div>
<div class="t" style="left:830.2px;top:751px;font-size:24px;color:#e3e5e8;">SESSION</div>
<div class="t" style="left:1028.5px;top:751px;font-size:24px;color:#e3e5e8;">ODFj<span style="letter-spacing:1.4px">...</span></div>
<div class="t" style="left:1126.2px;top:751px;font-size:24px;color:#e3e5e8;">mituan.zone</div>
<div class="t" style="left:1481.5px;top:751px;font-size:24px;color:#e3e5e8;">/api/</div>
<div class="t" style="left:1590px;top:752px;font-size:24px;color:#e3e5e8;">会话</div>
<div class="t" style="left:1703.5px;top:751px;font-size:24px;color:#e3e5e8;">55</div>
<div class="a" style="left:1454px;top:751.5px;width:19.5px;height:19.5px;border-radius:50%;background:#58595a;box-shadow:inset 0 0 0 1px #6a6b6c"></div>
<div class="t" style="left:1459px;top:752px;font-size:17px;color:#e8eaed;font-family:'Liberation Serif',serif;font-weight:bold;width:10px;text-align:center">i</div>
<svg class="a" style="left:1802px;top:753px" width="20" height="20" viewBox="0 0 20 20"><path d="M2.5 10.5L7.5 18C10 11 13 6 18 1.5" stroke="#e3e5e8" stroke-width="2.6" fill="none" stroke-linecap="round"/></svg>
<div class="t" style="left:830.2px;top:790.3px;font-size:24px;color:#e3e5e8;">remember-me</div>
<div class="t" style="left:1028.5px;top:790.3px;font-size:24px;color:#e3e5e8;">UHd<span style="letter-spacing:1.6px">...</span></div>
<div class="t" style="left:1126.2px;top:790.3px;font-size:24px;color:#e3e5e8;">mituan.zone</div>
<div class="t" style="left:1481.5px;top:790.3px;font-size:24px;color:#e3e5e8;">/api</div>
<div class="t" style="left:1589.5px;top:790.3px;font-size:24px;color:#e3e5e8;">2022-...</div>
<div class="t" style="left:1703.5px;top:790.3px;font-size:24px;color:#e3e5e8;">87</div>
<div class="a" style="left:1454px;top:790.8px;width:19.5px;height:19.5px;border-radius:50%;background:#58595a;box-shadow:inset 0 0 0 1px #6a6b6c"></div>
<div class="t" style="left:1459px;top:791.3px;font-size:17px;color:#e8eaed;font-family:'Liberation Serif',serif;font-weight:bold;width:10px;text-align:center">i</div>
<svg class="a" style="left:1802px;top:792.3px" width="20" height="20" viewBox="0 0 20 20"><path d="M2.5 10.5L7.5 18C10 11 13 6 18 1.5" stroke="#e3e5e8" stroke-width="2.6" fill="none" stroke-linecap="round"/></svg>
<div class="a" style="left:0;top:204px;width:1920px;height:2px;background:#55575b"></div>
</body></html>
